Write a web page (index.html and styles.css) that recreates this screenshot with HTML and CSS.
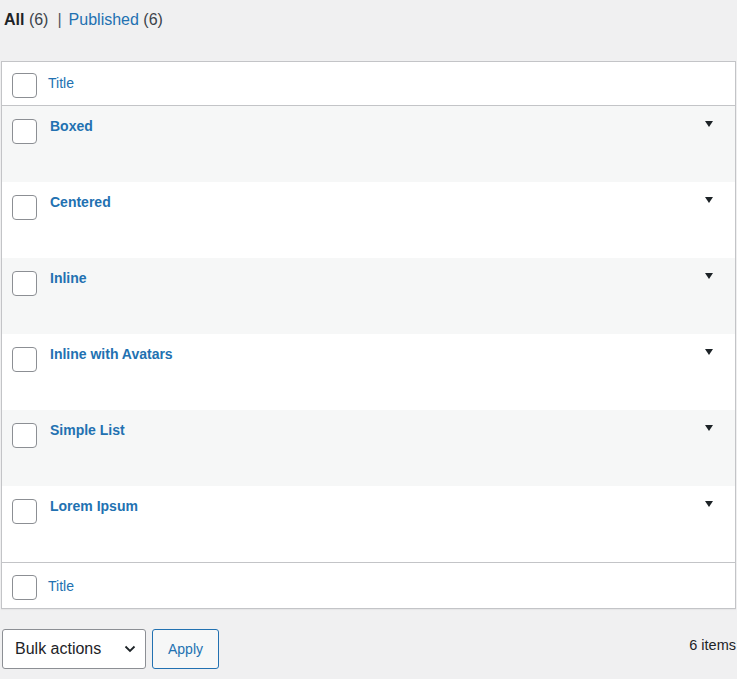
FILE: index.html
```html
<!DOCTYPE html>
<html lang="en">
<head>
<meta charset="utf-8">
<title>Posts</title>
<link rel="stylesheet" href="styles.css">
</head>
<body>
<div class="wrap">
  <ul class="views">
    <li class="current">All <span class="count">(6)</span></li>
    <li class="sep">|</li>
    <li><a href="#">Published</a> <span class="count">(6)</span></li>
  </ul>

  <div class="list-table">
    <div class="row head">
      <span class="check"></span>
      <a class="col-title" href="#">Title</a>
    </div>
    <div class="row item odd">
      <span class="check"></span>
      <a class="row-title" href="#">Boxed</a>
      <span class="toggle"><svg width="8" height="6" viewBox="0 0 8 6"><path d="M0 0h8L4 6z" fill="#1d2327"/></svg></span>
    </div>
    <div class="row item">
      <span class="check"></span>
      <a class="row-title" href="#">Centered</a>
      <span class="toggle"><svg width="8" height="6" viewBox="0 0 8 6"><path d="M0 0h8L4 6z" fill="#1d2327"/></svg></span>
    </div>
    <div class="row item odd">
      <span class="check"></span>
      <a class="row-title" href="#">Inline</a>
      <span class="toggle"><svg width="8" height="6" viewBox="0 0 8 6"><path d="M0 0h8L4 6z" fill="#1d2327"/></svg></span>
    </div>
    <div class="row item">
      <span class="check"></span>
      <a class="row-title" href="#">Inline with Avatars</a>
      <span class="toggle"><svg width="8" height="6" viewBox="0 0 8 6"><path d="M0 0h8L4 6z" fill="#1d2327"/></svg></span>
    </div>
    <div class="row item odd">
      <span class="check"></span>
      <a class="row-title" href="#">Simple List</a>
      <span class="toggle"><svg width="8" height="6" viewBox="0 0 8 6"><path d="M0 0h8L4 6z" fill="#1d2327"/></svg></span>
    </div>
    <div class="row item">
      <span class="check"></span>
      <a class="row-title" href="#">Lorem Ipsum</a>
      <span class="toggle"><svg width="8" height="6" viewBox="0 0 8 6"><path d="M0 0h8L4 6z" fill="#1d2327"/></svg></span>
    </div>
    <div class="row foot">
      <span class="check"></span>
      <a class="col-title" href="#">Title</a>
    </div>
  </div>

  <div class="tablenav">
    <div class="bulk">
      <span>Bulk actions</span>
      <svg width="12" height="8" viewBox="0 0 12 8"><path d="M1.5 1.5L6 6l4.5-4.5" fill="none" stroke="#1d2327" stroke-width="1.8"/></svg>
    </div>
    <button class="apply" type="button">Apply</button>
    <span class="items">6 items</span>
  </div>
</div>
</body>
</html>
```
FILE: styles.css
```css
* { box-sizing: border-box; }
html, body { margin: 0; padding: 0; }
body {
  background: #f0f0f1;
  font-family: "Liberation Sans", Arial, sans-serif;
  color: #1d2327;
  width: 737px;
  height: 679px;
  overflow: hidden;
}
a { color: #2271b1; text-decoration: none; }

.wrap { padding: 0 1px; }

.views {
  list-style: none;
  margin: 0;
  padding: 8px 0 29px 3px;
  display: flex;
  font-size: 16px;
  line-height: 24px;
}
.views .current { font-weight: bold; }
.views .count { font-weight: normal; color: #3c434a; }
.views .sep { color: #50575e; margin: 0 7px 0 9px; }

.list-table {
  background: #fff;
  border: 1px solid #c3c4c7;
  box-shadow: 0 1px 1px rgba(0,0,0,.04);
  width: 735px;
}
.row { display: flex; align-items: flex-start; }
.check {
  width: 25px;
  height: 25px;
  border: 1px solid #8c8f94;
  border-radius: 4px;
  background: #fff;
  margin-left: 10px;
  flex: none;
}
.head { height: 44px; padding-top: 11px; border-bottom: 1px solid #c3c4c7; }
.foot { height: 46px; padding-top: 12px; border-top: 1px solid #c3c4c7; }
.col-title { font-size: 14px; line-height: 20px; margin-left: 11px; }
.foot .col-title { margin-top: 1px; }

.item { height: 76px; padding-top: 13px; }
.item.odd { background: #f6f7f7; }
.row-title {
  font-size: 14px;
  line-height: 20px;
  font-weight: bold;
  margin-left: 13px;
  margin-top: -3px;
  flex: 1;
}
.toggle { width: 8px; height: 6px; margin: 2px 22px 0 0; display: flex; }
.toggle svg { display: block; }

.tablenav {
  display: flex;
  align-items: flex-start;
  margin-top: 20px;
  padding-left: 1px;
}
.bulk {
  width: 144px;
  height: 40px;
  border: 1px solid #8c8f94;
  border-radius: 3px;
  background: #fff;
  display: flex;
  align-items: center;
  justify-content: space-between;
  padding: 0 9px 0 12px;
  font-size: 16px;
}
.apply {
  margin-left: 6px;
  width: 67px;
  height: 40px;
  border: 1px solid #2271b1;
  border-radius: 3px;
  background: #f6f7f7;
  color: #2271b1;
  font-family: "Liberation Sans", Arial, sans-serif;
  font-size: 14px;
  padding: 0;
}
.items {
  margin-left: auto;
  font-size: 14.5px;
  line-height: 20px;
  margin-top: 6px;
  color: #1d2327;
}
```
